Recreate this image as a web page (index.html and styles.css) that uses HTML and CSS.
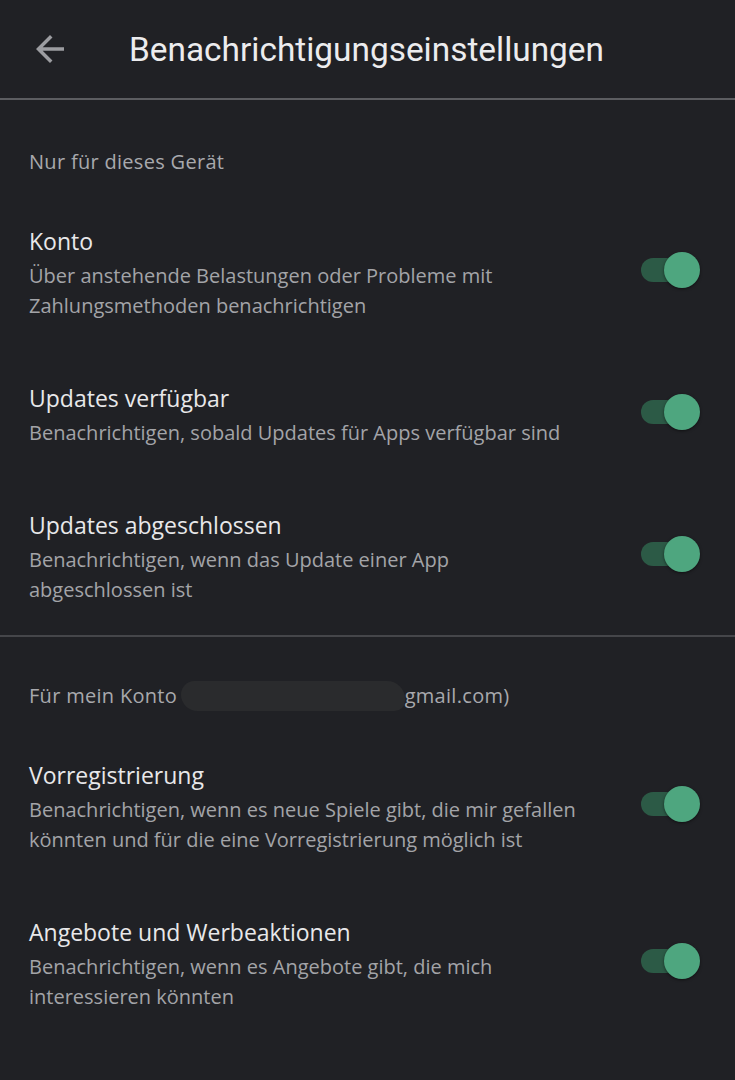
FILE: index.html
```html
<!DOCTYPE html>
<html lang="de">
<head>
  <meta charset="UTF-8">
  <meta name="viewport" content="width=device-width, initial-scale=1.0">
  <title>Benachrichtigungseinstellungen</title>
  <link rel="stylesheet" href="styles.css">
</head>
<body>
  <!-- Kopfzeile -->
  <header class="topbar">
    <button class="back" aria-label="Zurück">
      <svg viewBox="0 0 24 24" width="42" height="42"><path d="M20 11H7.83l5.59-5.59L12 4l-8 8 8 8 1.41-1.41L7.83 13H20v-2z" fill="currentColor"/></svg>
    </button>
    <h1>Benachrichtigungseinstellungen</h1>
  </header>

  <!-- Gerät -->
  <section class="section">
    <h2 class="section-title">Nur für dieses Gerät</h2>

    <div class="row">
      <div class="text">
        <div class="title">Konto</div>
        <div class="desc">Über anstehende Belastungen oder Probleme mit Zahlungsmethoden benachrichtigen</div>
      </div>
      <span class="switch"></span>
    </div>

    <div class="row">
      <div class="text">
        <div class="title">Updates verfügbar</div>
        <div class="desc">Benachrichtigen, sobald Updates für Apps verfügbar sind</div>
      </div>
      <span class="switch"></span>
    </div>

    <div class="row">
      <div class="text">
        <div class="title">Updates abgeschlossen</div>
        <div class="desc">Benachrichtigen, wenn das Update einer App abgeschlossen ist</div>
      </div>
      <span class="switch"></span>
    </div>
  </section>

  <!-- Konto -->
  <section class="section">
    <h2 class="section-title">Für mein Konto <span class="redact"></span>gmail.com)</h2>

    <div class="row">
      <div class="text">
        <div class="title">Vorregistrierung</div>
        <div class="desc">Benachrichtigen, wenn es neue Spiele gibt, die mir gefallen könnten und für die eine Vorregistrierung möglich ist</div>
      </div>
      <span class="switch"></span>
    </div>

    <div class="row">
      <div class="text">
        <div class="title">Angebote und Werbeaktionen</div>
        <div class="desc">Benachrichtigen, wenn es Angebote gibt, die mich interessieren könnten</div>
      </div>
      <span class="switch"></span>
    </div>
  </section>
</body>
</html>
```

FILE: styles.css
```css
/* Allgemein */
body {
  margin: 0;
  background: #202125;
  font-family: 'Open Sans', sans-serif;
  color: #e6e6e8;
  min-height: 1080px;
}

/* Kopfzeile */
.topbar {
  display: flex;
  align-items: center;
  height: 98px;
  border-bottom: 2px solid #5c5d61;
}
.back {
  display: flex;
  background: none;
  border: none;
  padding: 0;
  margin: 0 0 0 29px;
  color: #9c9da1;
}
.topbar h1 {
  margin: 0 0 0 58px;
  font-family: 'Roboto', sans-serif;
  font-size: 33.4px;
  font-weight: 400;
  color: #ececee;
}

/* Abschnitte */
.section {
  padding: 47px 0 0;
}
.section + .section {
  border-top: 2px solid #45464a;
  padding-top: 44px;
}
.section-title {
  margin: 0 0 18px 29px;
  font-size: 20px;
  font-weight: 400;
  line-height: 30px;
  letter-spacing: 0.3px;
  color: #a8a9ad;
}
.redact {
  display: inline-block;
  width: 224px;
  height: 30px;
  margin: 0 0 0 -2px;
  vertical-align: top;
  background: #2a2b2d;
  border-radius: 18px 24px 14px 22px;
}

/* Zeilen */
.row {
  display: flex;
  align-items: center;
  padding: 31px 35px 31px 29px;
}
.section:first-of-type .row:last-child {
  padding-bottom: 30px;
}
.text {
  flex: 1;
  padding-right: 58px;
}
.title {
  font-size: 23px;
  line-height: 30px;
  color: #e8e8ea;
  margin-bottom: 5px;
}
.desc {
  font-size: 20px;
  line-height: 30px;
  color: #a3a4a8;
}

/* Schalter */
.switch {
  position: relative;
  flex: none;
  width: 59px;
  height: 36px;
  margin-bottom: 8px;
}
.switch::before {
  content: "";
  position: absolute;
  left: 0;
  top: 6px;
  width: 54px;
  height: 24px;
  border-radius: 12px;
  background: #2c5a46;
}
.switch::after {
  content: "";
  position: absolute;
  right: 0;
  top: 0;
  width: 36px;
  height: 36px;
  border-radius: 50%;
  background: #4ea67f;
  box-shadow: 0 1px 3px rgba(0, 0, 0, 0.5);
}
```
